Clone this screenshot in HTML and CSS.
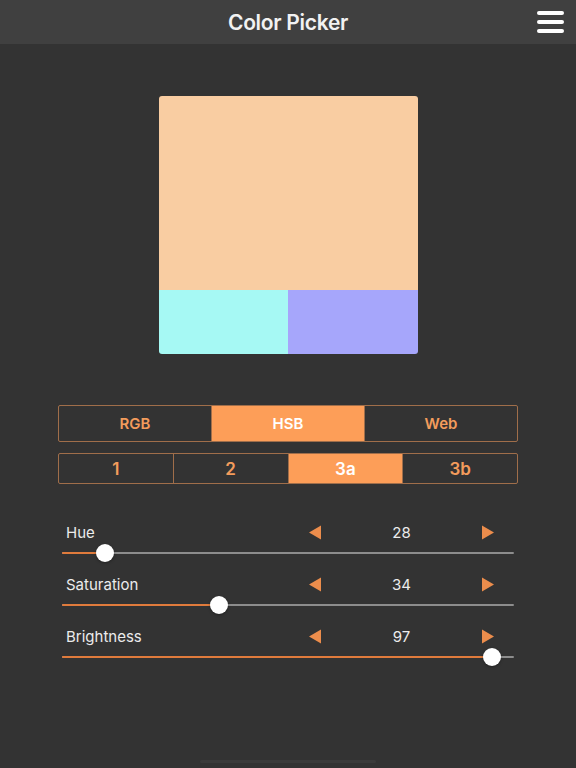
FILE: index.html
```html
<!DOCTYPE html>
<html lang="en">
<head>
<meta charset="utf-8">
<title>Color Picker</title>
<link rel="stylesheet" href="styles.css">
</head>
<body>
<header class="topbar">
  <h1 class="title">Color Picker</h1>
  <button class="menu" aria-label="Menu">
    <span></span><span></span><span></span>
  </button>
</header>

<main class="content">
  <div class="swatch">
    <div class="swatch-main"></div>
    <div class="swatch-pair">
      <div class="swatch-a"></div>
      <div class="swatch-b"></div>
    </div>
  </div>

  <div class="seg seg-mode">
    <div class="seg-item">RGB</div>
    <div class="seg-item active">HSB</div>
    <div class="seg-item">Web</div>
  </div>

  <div class="seg seg-scheme">
    <div class="seg-item">1</div>
    <div class="seg-item">2</div>
    <div class="seg-item active">3a</div>
    <div class="seg-item">3b</div>
  </div>

  <section class="sliders">
    <div class="slider">
      <div class="slider-head">
        <span class="slider-label">Hue</span>
        <div class="stepper">
          <svg class="arrow" viewBox="0 0 12 14"><path d="M0 7 L12 0 L12 14 Z"/></svg>
          <span class="value">28</span>
          <svg class="arrow" viewBox="0 0 12 14"><path d="M12 7 L0 0 L0 14 Z"/></svg>
        </div>
      </div>
      <div class="track" style="--v:0.0778">
        <div class="track-fill"></div>
        <div class="thumb"></div>
      </div>
    </div>

    <div class="slider">
      <div class="slider-head">
        <span class="slider-label">Saturation</span>
        <div class="stepper">
          <svg class="arrow" viewBox="0 0 12 14"><path d="M0 7 L12 0 L12 14 Z"/></svg>
          <span class="value">34</span>
          <svg class="arrow" viewBox="0 0 12 14"><path d="M12 7 L0 0 L0 14 Z"/></svg>
        </div>
      </div>
      <div class="track" style="--v:0.34">
        <div class="track-fill"></div>
        <div class="thumb"></div>
      </div>
    </div>

    <div class="slider">
      <div class="slider-head">
        <span class="slider-label">Brightness</span>
        <div class="stepper">
          <svg class="arrow" viewBox="0 0 12 14"><path d="M0 7 L12 0 L12 14 Z"/></svg>
          <span class="value">97</span>
          <svg class="arrow" viewBox="0 0 12 14"><path d="M12 7 L0 0 L0 14 Z"/></svg>
        </div>
      </div>
      <div class="track" style="--v:0.97">
        <div class="track-fill"></div>
        <div class="thumb"></div>
      </div>
    </div>
  </section>
</main>

<div class="home-indicator"></div>
</body>
</html>
```

FILE: styles.css
```css
* { box-sizing: border-box; }

html, body {
  margin: 0;
  height: 100%;
}

body {
  background: #333333;
  font-family: Inter, "Noto Sans", "Liberation Sans", sans-serif;
  color: #ececec;
  position: relative;
  overflow: hidden;
}

/* top navigation bar */
.topbar {
  height: 44px;
  background: #404040;
  display: flex;
  align-items: center;
  justify-content: center;
  position: relative;
}

.title {
  margin: 0;
  font-size: 21px;
  font-weight: 600;
  color: #f2f2f2;
  letter-spacing: -0.3px;
}

.menu {
  position: absolute;
  right: 12px;
  top: 11px;
  width: 27px;
  height: 22px;
  padding: 0;
  border: 0;
  background: none;
  display: flex;
  flex-direction: column;
  justify-content: space-between;
}

.menu span {
  display: block;
  height: 4px;
  border-radius: 2px;
  background: #ffffff;
}

/* main column */
.content {
  display: flex;
  flex-direction: column;
  align-items: center;
}

/* colour preview */
.swatch {
  margin-top: 52px;
  width: 259px;
  height: 258px;
  border-radius: 3px;
  overflow: hidden;
  display: flex;
  flex-direction: column;
}

.swatch-main {
  height: 194px;
  background: #f9cda2;
}

.swatch-pair {
  flex: 1;
  display: flex;
}

.swatch-a {
  flex: 1;
  background: #a6f9f4;
}

.swatch-b {
  flex: 1;
  background: #a6a6fb;
}

/* segmented controls */
.seg {
  display: flex;
  border: 1px solid #a06e4a;
  border-radius: 2px;
  overflow: hidden;
}

.seg-item {
  flex: 1;
  display: flex;
  align-items: center;
  justify-content: center;
  color: #f39c5c;
  font-weight: 600;
}

.seg-item + .seg-item {
  border-left: 1px solid #a06e4a;
}

.seg-item.active {
  background: #fd9e58;
  color: #ffffff;
}

.seg-mode {
  margin-top: 51px;
  width: 460px;
  height: 37px;
  font-size: 15px;
}

.seg-scheme {
  margin-top: 11px;
  width: 460px;
  height: 31px;
  font-size: 17px;
}

/* sliders */
.sliders {
  margin-top: 38px;
  width: 452px;
  display: flex;
  flex-direction: column;
  gap: 10px;
}

.slider-head {
  height: 20px;
  display: flex;
  align-items: center;
}

.slider-label {
  padding-left: 4px;
  font-size: 15px;
  color: #ececec;
}

.stepper {
  margin-left: auto;
  margin-right: 20px;
  width: 185px;
  display: flex;
  align-items: center;
}

.arrow {
  width: 12px;
  height: 15px;
  fill: #ec8d4c;
  flex: none;
}

.value {
  flex: 1;
  text-align: center;
  font-size: 15px;
  color: #ececec;
}

.track {
  position: relative;
  height: 22px;
  --thumb: 18px;
}

.track::before {
  content: "";
  position: absolute;
  left: 0;
  right: 0;
  top: 10px;
  height: 2px;
  background: #8d8d8d;
  border-radius: 1px;
}

.track-fill {
  position: absolute;
  left: 0;
  top: 10px;
  height: 2px;
  width: calc(var(--thumb) / 2 + (100% - var(--thumb)) * var(--v));
  background: #e07b3c;
  border-radius: 1px;
}

.thumb {
  position: absolute;
  top: 2px;
  left: calc((100% - var(--thumb)) * var(--v));
  width: var(--thumb);
  height: var(--thumb);
  border-radius: 50%;
  background: #ffffff;
  box-shadow: 0 1px 3px rgba(0, 0, 0, 0.35);
}

/* system home indicator */
.home-indicator {
  position: absolute;
  left: 200px;
  bottom: 5px;
  width: 176px;
  height: 3px;
  border-radius: 2px;
  background: #3b3b3b;
}
```
